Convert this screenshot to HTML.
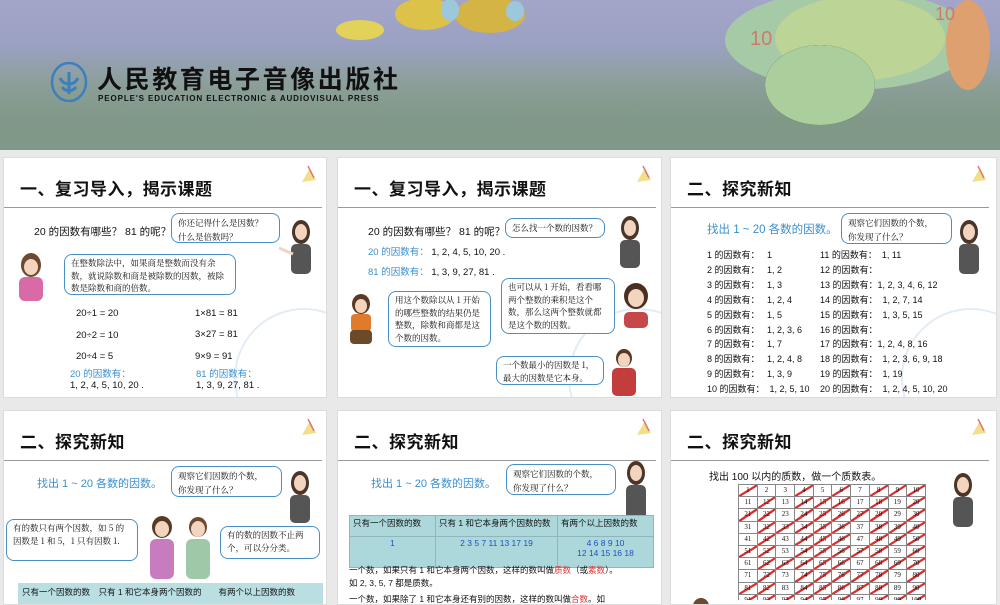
<!DOCTYPE html>
<html><head><meta charset="utf-8">
<style>
*{margin:0;padding:0;box-sizing:border-box}
body{width:1000px;height:600px;overflow:hidden;background:#e9e9e9;font-family:"Liberation Sans","Noto Sans CJK SC",sans-serif;position:relative;color:#111}
.a{position:absolute}
#hdr{left:0;top:0;width:1000px;height:150px;background:linear-gradient(180deg,#a3a5c9 0%,#9ba1c2 30%,#8c9f9a 55%,#809888 80%,#7f9888 100%)}
.card{position:absolute;background:#fff;border:1px solid #dcdcdc;overflow:hidden}
.t{position:absolute;left:16px;top:17px;font-size:17px;font-weight:bold;font-family:"Noto Sans CJK SC",sans-serif;letter-spacing:0.5px;color:#111}
.ln{position:absolute;left:0;top:49px;width:318px;height:1px;background:#9a9a9a}
.ic{position:absolute;right:8px;top:6px;width:20px;height:20px}
.s{font-size:9.5px;white-space:nowrap;position:absolute}
.bub{position:absolute;background:#fff;border:1px solid #4a90c8;border-radius:8px;font-size:8.5px;line-height:14px;padding:2px 6px;font-family:"Noto Serif CJK SC","Noto Sans CJK SC",serif;color:#111}
.bl{color:#3a8fd0}
.fig{position:absolute}
.wm{position:absolute;border:2px solid #e3ecf5;border-radius:50%}
.grid{position:absolute;left:738px;top:484px;width:188px;height:116px;overflow:hidden;border-left:1px solid #888;border-top:1px solid #888}
.grid i{float:left;width:18.7px;height:12.2px;border-right:1px solid #888;border-bottom:1px solid #888;font-style:normal;font-size:7px;text-align:center;line-height:11px;font-family:"Liberation Serif",serif}
.grid i.c{background:linear-gradient(to bottom right,transparent 44%,#d9302f 46%,#d9302f 56%,transparent 58%)}
table{border-collapse:collapse;position:absolute;font-size:8.5px}
td{border:1px solid #8fb7bb;vertical-align:top;padding:1px 3px}
</style></head><body>
<div id="hdr" class="a">
  <svg class="a" style="left:320px;top:0" width="260" height="50"><ellipse cx="40" cy="30" rx="24" ry="10" fill="#e3d25a"/><ellipse cx="105" cy="14" rx="30" ry="16" fill="#dcc248"/><ellipse cx="170" cy="15" rx="35" ry="18" fill="#d3b444"/><ellipse cx="130" cy="10" rx="9" ry="11" fill="#9cc8dc"/><ellipse cx="195" cy="11" rx="9" ry="10" fill="#9cc8dc"/></svg>
  <svg class="a" style="left:710px;top:0" width="290" height="135"><ellipse cx="140" cy="40" rx="125" ry="50" fill="#a6c9a6"/><ellipse cx="150" cy="38" rx="85" ry="42" fill="#bcd596"/><ellipse cx="258" cy="45" rx="22" ry="45" fill="#dfa070"/><ellipse cx="110" cy="85" rx="55" ry="40" fill="#abceа0" /><ellipse cx="110" cy="85" rx="55" ry="40" fill="#aacf9c"/><text x="40" y="45" font-size="20" fill="#d07a6a" font-family="Liberation Sans">10</text><text x="225" y="20" font-size="18" fill="#d07a6a" font-family="Liberation Sans">10</text></svg>
  <svg class="a" style="left:50px;top:62px" width="40" height="40"><ellipse cx="19" cy="20" rx="17" ry="19" fill="none" stroke="#3a7fc0" stroke-width="2.5"/><path d="M10 16c4 8 14 8 18 0M12 25c4 5 10 5 14 0M19 10v22" stroke="#3a7fc0" stroke-width="3" fill="none"/></svg>
  <div class="a" style="left:97px;top:63px;font-size:25px;font-weight:bold;font-family:'Noto Sans CJK SC',sans-serif;letter-spacing:2.6px;color:#111;line-height:30px">人民教育电子音像出版社</div>
  <div class="a" style="left:98px;top:94px;font-size:8px;font-weight:bold;color:#111;letter-spacing:0.9px">PEOPLE'S EDUCATION ELECTRONIC &amp; AUDIOVISUAL PRESS</div>
</div>

<!-- Card 1 -->
<div class="card" style="left:3px;top:157px;width:324px;height:241px">
  <div class="t">一、复习导入，揭示课题</div><div class="ln"></div>
  <svg class="ic" viewBox="0 0 20 20"><path d="M4 18L12 4 18 16z" fill="#f1df8a"/><path d="M10 2l6 12" stroke="#d77" stroke-width="1.5"/></svg>
  <div class="wm" style="left:230px;top:150px;width:140px;height:140px"></div>
  <div class="s" style="left:30px;top:66px;font-size:10.5px">20 的因数有哪些？ 81 的呢？</div>
  <div class="bub" style="left:167px;top:55px;width:109px;height:30px">你还记得什么是因数？<br>什么是倍数吗？</div>
  <svg class="fig" style="left:275px;top:60px" width="45" height="60"><ellipse cx="22" cy="14" rx="9" ry="12" fill="#4a3528"/><ellipse cx="22" cy="14" rx="6" ry="8" fill="#f3d4bf"/><rect x="12" y="26" width="20" height="30" rx="5" fill="#555"/><path d="M0 30l14 6" stroke="#f3d4bf" stroke-width="3"/></svg>
  <svg class="fig" style="left:5px;top:95px" width="40" height="52"><ellipse cx="22" cy="12" rx="10" ry="12" fill="#6b4a30"/><ellipse cx="22" cy="14" rx="7" ry="8" fill="#f3d4bf"/><rect x="10" y="24" width="24" height="24" rx="6" fill="#d86aa8"/></svg>
  <div class="bub" style="left:60px;top:96px;width:172px;height:41px;line-height:12.5px">在整数除法中，如果商是整数而没有余数，就说除数和商是被除数的因数，被除数是除数和商的倍数。</div>
  <div class="s" style="left:72px;top:150px">20÷1 = 20</div><div class="s" style="left:191px;top:150px">1×81 = 81</div>
  <div class="s" style="left:72px;top:172px">20÷2 = 10</div><div class="s" style="left:191px;top:171px">3×27 = 81</div>
  <div class="s" style="left:72px;top:193px">20÷4 = 5</div><div class="s" style="left:191px;top:193px">9×9 = 91</div>
  <div class="s bl" style="left:66px;top:208px">20 的因数有：</div><div class="s bl" style="left:192px;top:208px">81 的因数有：</div>
  <div class="s" style="left:66px;top:222px">1, 2, 4, 5, 10, 20 .</div><div class="s" style="left:192px;top:222px">1, 3, 9, 27, 81 .</div>
</div>

<!-- Card 2 -->
<div class="card" style="left:337px;top:157px;width:325px;height:241px">
  <div class="t">一、复习导入，揭示课题</div><div class="ln"></div>
  <svg class="ic" viewBox="0 0 20 20"><path d="M4 18L12 4 18 16z" fill="#f1df8a"/><path d="M10 2l6 12" stroke="#d77" stroke-width="1.5"/></svg>
  <div class="wm" style="left:230px;top:150px;width:140px;height:140px"></div>
  <div class="s" style="left:30px;top:66px;font-size:10.5px">20 的因数有哪些？ 81 的呢？</div>
  <div class="s" style="left:30px;top:86px"><span class="bl">20 的因数有：</span> 1, 2, 4, 5, 10, 20 .</div>
  <div class="s" style="left:30px;top:106px"><span class="bl">81 的因数有：</span> 1, 3, 9, 27, 81 .</div>
  <div class="bub" style="left:167px;top:60px;width:100px;height:20px;line-height:14px">怎么找一个数的因数？</div>
  <svg class="fig" style="left:270px;top:56px" width="45" height="55"><ellipse cx="22" cy="14" rx="9" ry="12" fill="#4a3528"/><ellipse cx="22" cy="14" rx="6" ry="8" fill="#f3d4bf"/><rect x="12" y="26" width="20" height="28" rx="5" fill="#555"/></svg>
  <svg class="fig" style="left:5px;top:134px" width="36" height="60"><ellipse cx="18" cy="12" rx="9" ry="10" fill="#5a3a22"/><ellipse cx="18" cy="14" rx="6" ry="7" fill="#f3d4bf"/><rect x="8" y="22" width="20" height="18" rx="4" fill="#e07a2c"/><rect x="7" y="38" width="22" height="14" rx="4" fill="#6b4a2a"/></svg>
  <div class="bub" style="left:50px;top:133px;width:103px;height:56px;line-height:12.5px">用这个数除以从 1 开始的哪些整数的结果仍是整数，除数和商都是这个数的因数。</div>
  <div class="bub" style="left:163px;top:120px;width:114px;height:56px;line-height:12.5px">也可以从 1 开始，看看哪两个整数的乘积是这个数，那么这两个整数就都是这个数的因数。</div>
  <svg class="fig" style="left:280px;top:124px" width="36" height="48"><ellipse cx="18" cy="14" rx="12" ry="13" fill="#4a2f20"/><ellipse cx="18" cy="16" rx="8" ry="9" fill="#f3d4bf"/><rect x="6" y="30" width="24" height="16" rx="5" fill="#c64848"/></svg>
  <div class="bub" style="left:158px;top:198px;width:108px;height:29px;line-height:12.5px">一个数最小的因数是 1，最大的因数是它本身。</div>
  <svg class="fig" style="left:268px;top:188px" width="36" height="52"><ellipse cx="18" cy="12" rx="8" ry="9" fill="#5a3a22"/><ellipse cx="18" cy="14" rx="6" ry="7" fill="#f3d4bf"/><rect x="6" y="22" width="24" height="28" rx="5" fill="#c43d3d"/></svg>
</div>

<!-- Card 3 -->
<div class="card" style="left:670px;top:157px;width:327px;height:241px">
  <div class="t">二、探究新知</div><div class="ln"></div>
  <svg class="ic" viewBox="0 0 20 20"><path d="M4 18L12 4 18 16z" fill="#f1df8a"/><path d="M10 2l6 12" stroke="#d77" stroke-width="1.5"/></svg>
  <div class="wm" style="left:230px;top:150px;width:140px;height:140px"></div>
  <div class="s bl" style="left:36px;top:63px;font-size:11.5px">找出 1 ~ 20 各数的因数。</div>
  <div class="bub" style="left:170px;top:55px;width:111px;height:31px">观察它们因数的个数，<br>你发现了什么？</div>
  <svg class="fig" style="left:276px;top:60px" width="45" height="58"><ellipse cx="22" cy="14" rx="9" ry="12" fill="#4a3528"/><ellipse cx="22" cy="14" rx="6" ry="8" fill="#f3d4bf"/><rect x="12" y="26" width="20" height="30" rx="5" fill="#555"/></svg>
  <div class="a" style="left:36px;top:90px;font-size:9px;line-height:14.9px;white-space:pre">1 的因数有：   1
2 的因数有：   1, 2
3 的因数有：   1, 3
4 的因数有：   1, 2, 4
5 的因数有：   1, 5
6 的因数有：   1, 2, 3, 6
7 的因数有：   1, 7
8 的因数有：   1, 2, 4, 8
9 的因数有：   1, 3, 9
10 的因数有：  1, 2, 5, 10</div>
  <div class="a" style="left:149px;top:90px;font-size:9px;line-height:14.9px;white-space:pre">11 的因数有：  1, 11
12 的因数有：
13 的因数有：1, 2, 3, 4, 6, 12
14 的因数有：  1, 2, 7, 14
15 的因数有：  1, 3, 5, 15
16 的因数有：
17 的因数有：1, 2, 4, 8, 16
18 的因数有：  1, 2, 3, 6, 9, 18
19 的因数有：  1, 19
20 的因数有：  1, 2, 4, 5, 10, 20</div>
</div>

<!-- Card 4 -->
<div class="card" style="left:3px;top:410px;width:324px;height:195px">
  <div class="t">二、探究新知</div><div class="ln"></div>
  <svg class="ic" viewBox="0 0 20 20"><path d="M4 18L12 4 18 16z" fill="#f1df8a"/><path d="M10 2l6 12" stroke="#d77" stroke-width="1.5"/></svg>
  <div class="s bl" style="left:33px;top:64px;font-size:11px">找出 1 ~ 20 各数的因数。</div>
  <div class="bub" style="left:167px;top:55px;width:111px;height:31px">观察它们因数的个数，<br>你发现了什么？</div>
  <svg class="fig" style="left:276px;top:58px" width="40" height="55"><ellipse cx="20" cy="14" rx="9" ry="12" fill="#4a3528"/><ellipse cx="20" cy="14" rx="6" ry="8" fill="#f3d4bf"/><rect x="10" y="26" width="20" height="28" rx="5" fill="#555"/></svg>
  <div class="bub" style="left:2px;top:108px;width:132px;height:42px;line-height:13px">有的数只有两个因数，如 5 的因数是 1 和 5，1 只有因数 1.</div>
  <svg class="fig" style="left:136px;top:104px" width="80" height="70"><ellipse cx="22" cy="12" rx="10" ry="11" fill="#5a3a22"/><ellipse cx="22" cy="14" rx="7" ry="8" fill="#f3d4bf"/><rect x="10" y="24" width="24" height="40" rx="6" fill="#c87cc0"/><ellipse cx="58" cy="12" rx="9" ry="10" fill="#6b4a30"/><ellipse cx="58" cy="14" rx="7" ry="8" fill="#f3d4bf"/><rect x="46" y="24" width="24" height="40" rx="6" fill="#9ec8a8"/></svg>
  <div class="bub" style="left:216px;top:115px;width:100px;height:33px;line-height:13px">有的数的因数不止两个，可以分分类。</div>
  <div class="a" style="left:14px;top:172px;width:305px;height:25px;background:#b9dfe3;font-size:8.5px;padding:3px 4px;white-space:nowrap">只有一个因数的数　只有 1 和它本身两个因数的　　有两个以上因数的数</div>
</div>

<!-- Card 5 -->
<div class="card" style="left:337px;top:410px;width:325px;height:195px">
  <div class="t">二、探究新知</div><div class="ln"></div>
  <svg class="ic" viewBox="0 0 20 20"><path d="M4 18L12 4 18 16z" fill="#f1df8a"/><path d="M10 2l6 12" stroke="#d77" stroke-width="1.5"/></svg>
  <div class="s bl" style="left:33px;top:64px;font-size:11px">找出 1 ~ 20 各数的因数。</div>
  <div class="bub" style="left:168px;top:53px;width:110px;height:31px">观察它们因数的个数，<br>你发现了什么？</div>
  <svg class="fig" style="left:278px;top:48px" width="40" height="85"><ellipse cx="20" cy="14" rx="9" ry="12" fill="#4a3528"/><ellipse cx="20" cy="14" rx="6" ry="8" fill="#f3d4bf"/><rect x="10" y="26" width="20" height="55" rx="5" fill="#555"/></svg>
  <table style="left:11px;top:104px;width:305px;height:53px;background:#acd8dc">
    <tr><td style="width:86px">只有一个因数的数</td><td style="width:122px">只有 1 和它本身两个因数的数</td><td>有两个以上因数的数</td></tr>
    <tr><td style="text-align:center;color:#2050c0">1</td><td style="color:#2050c0;text-align:center">2 3 5 7 11 13 17 19</td><td style="color:#2050c0;text-align:center">4 6 8 9 10<br>12 14 15 16 18</td></tr>
  </table>
  <div class="s" style="left:11px;top:153px;font-size:8.5px">一个数，如果只有 1 和它本身两个因数，这样的数叫做<span style="color:#e03030">质数</span>（或<span style="color:#e03030">素数</span>）。</div>
  <div class="s" style="left:11px;top:166px;font-size:8.5px">如 2, 3, 5, 7 都是质数。</div>
  <div class="s" style="left:11px;top:182px;font-size:8.5px">一个数，如果除了 1 和它本身还有别的因数，这样的数叫做<span style="color:#e03030">合数</span>。如</div>
</div>

<!-- Card 6 -->
<div class="card" style="left:670px;top:410px;width:327px;height:195px">
  <div class="t">二、探究新知</div><div class="ln"></div>
  <svg class="ic" viewBox="0 0 20 20"><path d="M4 18L12 4 18 16z" fill="#f1df8a"/><path d="M10 2l6 12" stroke="#d77" stroke-width="1.5"/></svg>
  <div class="s" style="left:38px;top:57px;font-size:10px">找出 100 以内的质数，做一个质数表。</div>
  <svg class="fig" style="left:270px;top:60px" width="45" height="60"><ellipse cx="22" cy="14" rx="9" ry="12" fill="#4a3528"/><ellipse cx="22" cy="14" rx="6" ry="8" fill="#f3d4bf"/><rect x="12" y="26" width="20" height="30" rx="5" fill="#555"/></svg>
  <svg class="fig" style="left:20px;top:185px" width="20" height="12"><ellipse cx="10" cy="10" rx="8" ry="8" fill="#6b4a30"/></svg>
</div>
<div class="grid">
<i class="c">1</i><i>2</i><i>3</i><i class="c">4</i><i>5</i><i class="c">6</i><i>7</i><i class="c">8</i><i class="c">9</i><i class="c">10</i>
<i>11</i><i class="c">12</i><i>13</i><i class="c">14</i><i class="c">15</i><i class="c">16</i><i>17</i><i class="c">18</i><i>19</i><i class="c">20</i>
<i class="c">21</i><i class="c">22</i><i>23</i><i class="c">24</i><i class="c">25</i><i class="c">26</i><i class="c">27</i><i class="c">28</i><i>29</i><i class="c">30</i>
<i>31</i><i class="c">32</i><i class="c">33</i><i class="c">34</i><i class="c">35</i><i class="c">36</i><i>37</i><i class="c">38</i><i class="c">39</i><i class="c">40</i>
<i>41</i><i class="c">42</i><i>43</i><i class="c">44</i><i class="c">45</i><i class="c">46</i><i>47</i><i class="c">48</i><i class="c">49</i><i class="c">50</i>
<i class="c">51</i><i class="c">52</i><i>53</i><i class="c">54</i><i class="c">55</i><i class="c">56</i><i class="c">57</i><i class="c">58</i><i>59</i><i class="c">60</i>
<i>61</i><i class="c">62</i><i class="c">63</i><i class="c">64</i><i class="c">65</i><i class="c">66</i><i>67</i><i class="c">68</i><i class="c">69</i><i class="c">70</i>
<i>71</i><i class="c">72</i><i>73</i><i class="c">74</i><i class="c">75</i><i class="c">76</i><i class="c">77</i><i class="c">78</i><i>79</i><i class="c">80</i>
<i class="c">81</i><i class="c">82</i><i>83</i><i class="c">84</i><i class="c">85</i><i class="c">86</i><i class="c">87</i><i class="c">88</i><i>89</i><i class="c">90</i>
<i class="c">91</i><i class="c">92</i><i class="c">93</i><i class="c">94</i><i class="c">95</i><i class="c">96</i><i>97</i><i class="c">98</i><i class="c">99</i><i class="c">100</i>
</div>
</body></html>
